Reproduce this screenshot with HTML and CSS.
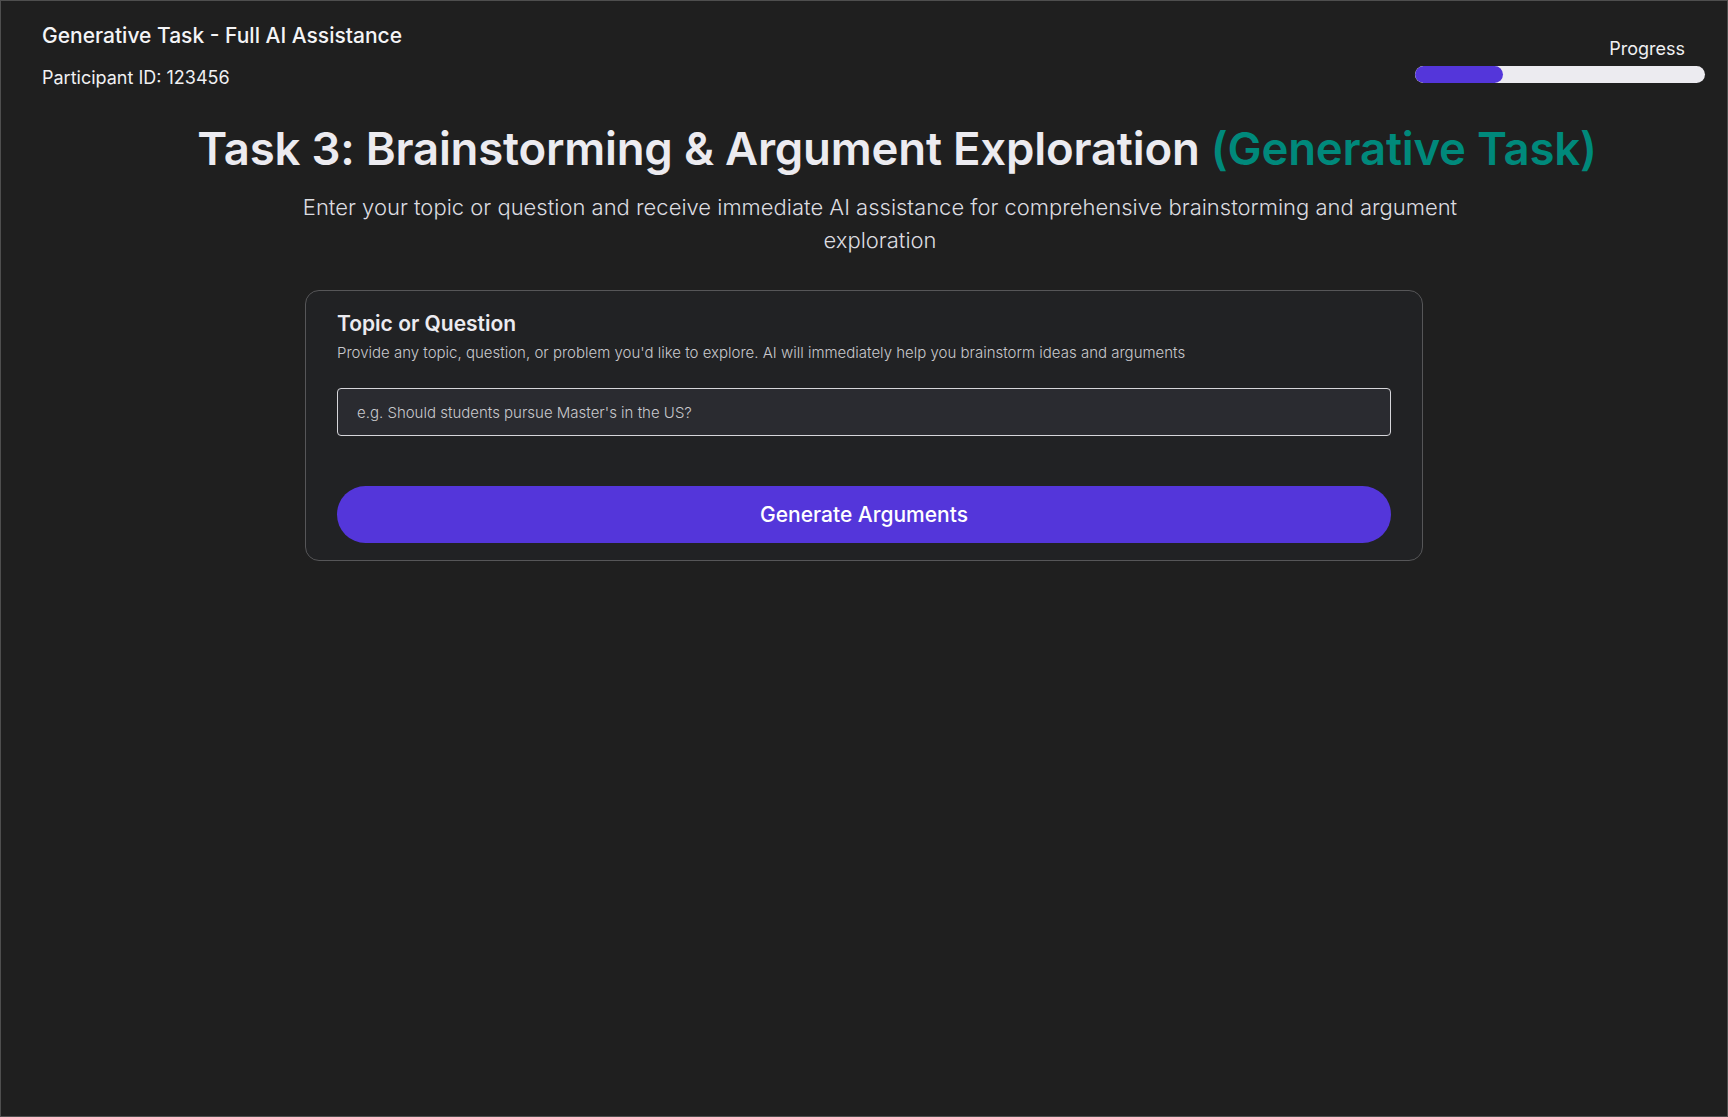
FILE: index.html
```html
<!DOCTYPE html>
<html lang="en">
<head>
<meta charset="utf-8">
<title>Generative Task - Full AI Assistance</title>
<link rel="stylesheet" href="styles.css">
</head>
<body>
<div class="frame">
  <header class="topbar">
    <div class="meta">
      <div class="meta-title">Generative Task - Full AI Assistance</div>
      <div class="meta-id">Participant ID: 123456</div>
    </div>
    <div class="progress">
      <div class="progress-label">Progress</div>
      <div class="progress-track"><div class="progress-fill" style="width:30.5%"></div></div>
    </div>
  </header>

  <main class="main">
    <h1 class="page-title">Task 3: Brainstorming &amp; Argument Exploration <span class="accent">(Generative Task)</span></h1>
    <p class="page-sub">Enter your topic or question and receive immediate AI assistance for comprehensive brainstorming and argument exploration</p>

    <section class="card">
      <h2 class="card-title">Topic or Question</h2>
      <p class="card-desc">Provide any topic, question, or problem you'd like to explore. AI will immediately help you brainstorm ideas and arguments</p>
      <input class="topic-input" type="text" placeholder="e.g. Should students pursue Master's in the US?">
      <button class="generate-btn" type="button">Generate Arguments</button>
    </section>
  </main>
</div>
</body>
</html>
```
FILE: styles.css
```css
* { box-sizing: border-box; }

html, body {
  margin: 0;
  padding: 0;
  background: #1f1f1f;
}

body {
  font-family: Inter, "Noto Sans", sans-serif;
  color: #ecebf0;
}

.frame {
  width: 1728px;
  height: 1117px;
  border: 1px solid #4e4e4e;
  background: #1f1f1f;
  overflow: hidden;
}

.topbar {
  display: flex;
  justify-content: space-between;
  align-items: flex-start;
  padding: 21px 22px 0 41px;
}

.meta-title {
  font-size: 21px;
  line-height: 28px;
  font-weight: 500;
  color: #f4f4f6;
}

.meta-id {
  margin-top: 16px;
  font-size: 18px;
  line-height: 24px;
  font-weight: 400;
  color: #f0f0f2;
}

.progress {
  width: 290px;
  padding-top: 15px;
}

.progress-label {
  text-align: right;
  padding-right: 20px;
  font-size: 18px;
  line-height: 24px;
  font-weight: 400;
  color: #f0f0f2;
}

.progress-track {
  margin-top: 5px;
  height: 17px;
  border-radius: 9px;
  background: #ecebf0;
  overflow: hidden;
}

.progress-fill {
  height: 100%;
  border-radius: 9px;
  background: #5436da;
}

.main {
  display: flex;
  flex-direction: column;
  align-items: center;
}

.page-title {
  margin: 31px 0 0 0;
  padding-left: 66px;
  font-size: 45.5px;
  line-height: 55px;
  font-weight: 600;
  letter-spacing: -0.2px;
  color: #ecebf0;
  text-align: center;
  white-space: nowrap;
}

.accent {
  color: #00897b;
}

.page-sub {
  margin: 15px 0 0 32px;
  max-width: 1200px;
  font-size: 22px;
  line-height: 33px;
  font-weight: 300;
  color: #dcdce0;
  text-align: center;
}

.card {
  margin-top: 33px;
  width: 1118px;
  border: 1px solid #565658;
  border-radius: 14px;
  background: #212224;
  padding: 19px 31px 17px 31px;
  display: flex;
  flex-direction: column;
}

.card-title {
  margin: 0;
  font-size: 21px;
  line-height: 28px;
  font-weight: 600;
  color: #ecebf0;
}

.card-desc {
  margin: 5px 0 0 0;
  font-size: 15px;
  line-height: 20px;
  font-weight: 300;
  color: #c8c8cc;
}

.topic-input {
  margin-top: 25px;
  height: 48px;
  width: 100%;
  border: 1px solid #d6d6da;
  border-radius: 4px;
  background: #2a2b30;
  padding: 0 19px;
  font-family: Inter, "Noto Sans", sans-serif;
  font-size: 15px;
  font-weight: 300;
  color: #ecebf0;
  outline: none;
}

.topic-input::placeholder {
  color: #c8c8cc;
  opacity: 1;
}

.generate-btn {
  margin-top: 50px;
  height: 57px;
  width: 100%;
  border: none;
  border-radius: 29px;
  background: #5436da;
  font-family: Inter, "Noto Sans", sans-serif;
  font-size: 21px;
  font-weight: 500;
  color: #ffffff;
  cursor: pointer;
}
```
